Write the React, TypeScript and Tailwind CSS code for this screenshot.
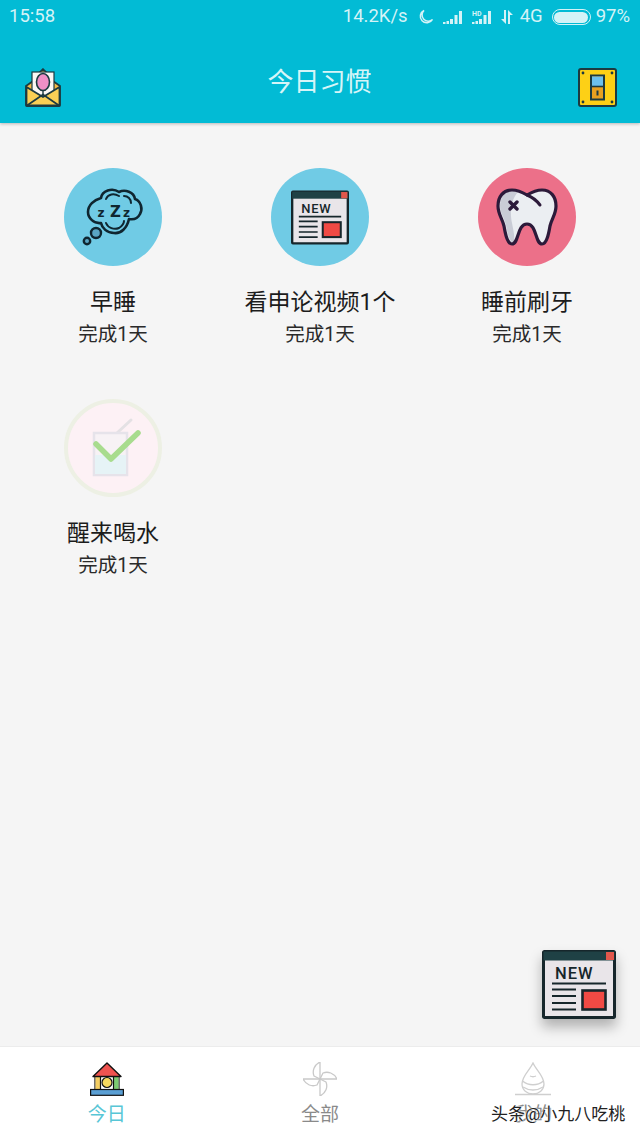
import React from "react";

const DARK = "#1c3a40";

function NewsIcon({ className }: { className: string }) {
  return (
    <svg viewBox="0 0 74 69" className={className}>
      <rect x="1.5" y="1.5" width="71" height="66" rx="1" fill="#e9e5e9" stroke="#16262b" strokeWidth="3" />
      <rect x="1.5" y="1.5" width="71" height="9" fill="#1f4145" />
      <rect x="64" y="2" width="8" height="8" fill="#e2574c" />
      <text x="13" y="29" fontFamily="Roboto, sans-serif" fontWeight="500" fontSize="16.5" letterSpacing="1" fill="#16262b">NEW</text>
      <path d="M10 33.5H64M10 39.5H34M10 46H34M10 53H34M10 59.5H34" stroke="#16262b" strokeWidth="2.2" fill="none" />
      <rect x="40.5" y="40.5" width="23" height="19" fill="#f04a44" stroke="#16262b" strokeWidth="2.6" />
    </svg>
  );
}

function SleepIcon() {
  return (
    <svg viewBox="0 0 98 98" className="w-[98px] h-[98px]">
      <path
        d="M37 30C38 23 48 19 55 24C61 21 70 24 71 31C77 33 79 41 76 46C74 50 70 52 65 51C63 60 57 66 50 65C43 65 38 60 37 55C30 56 24 50 24 44C24 37 30 32 37 30z"
        fill="none"
        stroke="#0f2630"
        strokeWidth="2.6"
        strokeLinejoin="round"
      />
      <path d="M42 31C44 26 50 25 55 28M60 28C64 28 67 31 67 35M42 55C44 60 50 62 55 60C58 58 60 56 60 53" fill="none" stroke="#0f2630" strokeWidth="2" strokeLinecap="round" />
      <text x="33.5" y="49" fontFamily="'DejaVu Sans', sans-serif" fontWeight="700" fontSize="12" fill="#0f2630">z</text>
      <text x="46" y="49" fontFamily="'DejaVu Sans', sans-serif" fontWeight="700" fontSize="15" fill="#0f2630">Z</text>
      <text x="59" y="49" fontFamily="'DejaVu Sans', sans-serif" fontWeight="700" fontSize="12" fill="#0f2630">z</text>
      <circle cx="32" cy="65" r="5" fill="#5aa6c4" stroke="#0f2630" strokeWidth="2.4" />
      <circle cx="23" cy="73" r="3.2" fill="#5aa6c4" stroke="#0f2630" strokeWidth="2.4" />
    </svg>
  );
}

function ToothIcon() {
  const outline =
    "M34 22c5 0 10 2 15 5 5-3 10-5 15-5 9 0 14 7 14 16 0 8-4 12-6 20-1 6-3 18-8 18-7 0-5-20-15-20s-8 20-15 20c-5 0-7-12-8-18-2-8-6-12-6-20 0-9 5-16 14-16z";
  return (
    <svg viewBox="0 0 98 98" className="w-[98px] h-[98px]">
      <path d={outline} fill="#ebeef2" />
      <path d="M22 38c0 7 4 11 6 19 1 6 3 18 8 18 1-8-1-14-2-20-2-9-2-22 6-31-2-1-4-2-6-2-7 0-12 8-12 16z" fill="#c9ccd6" />
      <path d={outline} fill="none" stroke="#2c1a3a" strokeWidth="3.2" strokeLinejoin="round" />
      <path d="M49 27c5 2 10 6 13 10" fill="none" stroke="#2c1a3a" strokeWidth="3" strokeLinecap="round" />
      <path d="M32 34l7 7M39 34l-7 7" stroke="#2c1a3a" strokeWidth="3.4" strokeLinecap="round" />
    </svg>
  );
}

function WaterIcon() {
  return (
    <svg viewBox="0 0 98 98" className="w-[98px] h-[98px]">
      <path d="M53 34l14-13" stroke="#e4e1e4" strokeWidth="3" fill="none" strokeLinecap="round" />
      <rect x="30" y="34" width="33" height="42" fill="#f7f2f5" stroke="#e6e3ea" strokeWidth="2.5" />
      <rect x="31" y="56" width="31" height="19" fill="#e6f3f6" />
      <path d="M32 45l15 15 27-26" fill="none" stroke="#a8dc8e" strokeWidth="5.5" strokeLinecap="round" strokeLinejoin="round" />
    </svg>
  );
}

function EnvelopeIcon() {
  return (
    <svg viewBox="0 0 36 39" className="w-9 h-[39px]">
      <path d="M18 1l4 4H14z" fill="#f7c94e" stroke={DARK} strokeWidth="1.6" />
      <path d="M1 18L18 6l17 12v19a1 1 0 0 1-1 1H2a1 1 0 0 1-1-1z" fill="#f5b945" stroke={DARK} strokeWidth="1.8" />
      <rect x="7" y="4" width="22" height="24" fill="#fbf8f5" stroke={DARK} strokeWidth="1.2" />
      <ellipse cx="18" cy="14" rx="6.5" ry="8.5" fill="#ef8fc6" stroke={DARK} strokeWidth="1.6" />
      <path d="M18 22.5v4" stroke={DARK} strokeWidth="1.4" />
      <path d="M1.5 19L18 29l16.5-10V37.5H1.5z" fill="#f9cf55" stroke={DARK} strokeWidth="1.8" strokeLinejoin="round" />
      <path d="M2 37.5l16-11 16 11" fill="none" stroke={DARK} strokeWidth="1.8" />
    </svg>
  );
}

function SwitchIcon() {
  return (
    <svg viewBox="0 0 39 39" className="w-[39px] h-[39px]">
      <rect x="1" y="1" width="37" height="37" rx="2" fill="#fdd016" stroke={DARK} strokeWidth="2" />
      <rect x="13" y="7.5" width="13" height="24" fill="#e8a020" stroke={DARK} strokeWidth="2" />
      <rect x="14" y="8.5" width="11" height="10" fill="#6cc0ee" />
      <path d="M13 18.5h13" stroke={DARK} strokeWidth="1.6" />
      <path d="M19.5 22.5v5" stroke={DARK} strokeWidth="2" />
      <g fill={DARK}>
        <circle cx="5" cy="5" r="1.4" />
        <circle cx="34" cy="5" r="1.4" />
        <circle cx="5" cy="34" r="1.4" />
        <circle cx="34" cy="34" r="1.4" />
      </g>
    </svg>
  );
}

function HouseIcon() {
  return (
    <svg viewBox="0 0 34 34" className="w-[34px] h-[34px]">
      <rect x="5" y="14" width="24" height="14" fill="#fff" stroke="#111" strokeWidth="1.2" />
      <rect x="5.5" y="14.5" width="5" height="13" fill="#f5cf63" />
      <rect x="23.5" y="14.5" width="5" height="13" fill="#7ccb72" />
      <path d="M10.5 14v14M23.5 14v14" stroke="#111" strokeWidth="1.2" />
      <circle cx="17" cy="20.5" r="5" fill="#f6d95e" stroke="#111" strokeWidth="1.2" />
      <path d="M17 1L3 14.5h28z" fill="#ef5350" stroke="#111" strokeWidth="1.4" strokeLinejoin="round" />
      <rect x="0.6" y="27.5" width="32.8" height="5.8" fill="#5a9fd4" stroke="#111" strokeWidth="1.2" />
    </svg>
  );
}

function PinwheelIcon() {
  return (
    <svg viewBox="0 0 34 34" className="w-[34px] h-[34px]" fill="none" stroke="#c9c9c9" strokeWidth="1.3" strokeLinejoin="round">
      <path d="M17 17L17 0C11 3 9 9 11 14z" />
      <path d="M17 17L34 17C31 11 25 9 20 11z" />
      <path d="M17 17L17 34C23 31 25 25 23 20z" />
      <path d="M17 17L0 17C3 23 9 25 14 23z" />
    </svg>
  );
}

function DropIcon() {
  return (
    <svg viewBox="0 0 36 34" className="w-9 h-[34px]" fill="none" stroke="#cfcfcf" strokeWidth="1.3">
      <path d="M18 1C15 8 7 14 7 22c0 6 5 10 11 10s11-4 11-10c0-8-8-14-11-21z" />
      <path d="M7.5 19c6 5 15 5 21 0M8 25c6 4 14 4 20 0M15 14c2 1 4 1 6 0" />
      <path d="M0 32.5h36" />
    </svg>
  );
}

function SignalIcon({ hd }: { hd?: boolean }) {
  return (
    <svg viewBox="0 0 22 16" className="w-[22px] h-4" fill="#d4f3f7">
      <rect x="0" y="13" width="2.5" height="2" />
      <rect x="3.5" y="12" width="2.5" height="3" />
      <rect x="7" y="10" width="3" height="5" />
      <rect x="11.5" y="6" width="3" height="9" />
      <rect x="16" y="2" width="3" height="13" />
      {hd && (
        <text x="0" y="6.5" fontFamily="Roboto, sans-serif" fontWeight="700" fontSize="7">
          HD
        </text>
      )}
    </svg>
  );
}

const habits = [
  { title: "早睡", bg: "bg-[#70cbe5]", icon: <SleepIcon /> },
  { title: "看申论视频1个", bg: "bg-[#70cbe5]", icon: <div className="flex items-center justify-center h-full"><NewsIcon className="w-[58px] h-[55px]" /></div> },
  { title: "睡前刷牙", bg: "bg-[#ec7089]", icon: <ToothIcon /> },
];

function Label({ title }: { title: string }) {
  return (
    <>
      <div className="mt-[22px] h-[30px] leading-[30px] text-[23px] text-[#1c1c1c] whitespace-nowrap">{title}</div>
      <div className="mt-[2px] h-[30px] leading-[30px] text-[19.5px] text-[#2a2a2a] whitespace-nowrap">完成1天</div>
    </>
  );
}

export default function App() {
  return (
    <div className="relative flex flex-col w-[640px] h-[1137px] bg-[#f5f5f5] overflow-hidden font-['Roboto','Noto_Sans_CJK_SC',sans-serif]">
      <header className="flex flex-col h-[123px] bg-[#02bbd5] shadow-[0_1px_3px_rgba(0,0,0,0.25)] z-10">
        <div className="flex items-center h-[34px] pl-[9px] pr-[10px] text-[18.5px] text-[#d4f3f7]">
          <span>15:58</span>
          <span className="ml-auto">14.2K/s</span>
          <svg viewBox="0 0 16 16" className="ml-[10px] w-4 h-4" fill="none" stroke="#d4f3f7" strokeWidth="1.5">
            <path d="M6 1.5a6.5 6.5 0 1 0 8.5 9A6 6 0 0 1 6 1.5z" />
          </svg>
          <span className="ml-[9px] flex"><SignalIcon /></span>
          <span className="ml-[7px] flex"><SignalIcon hd /></span>
          <svg viewBox="0 0 14 16" className="ml-[6px] w-[14px] h-4" fill="#d4f3f7">
            <path d="M4 1h2v14L1 10h3zM8 15V1l5 5h-3v9z" />
          </svg>
          <span className="ml-[6px]">4G</span>
          <span className="ml-[9px] flex items-center w-[39px] h-4 rounded-full border-[1.5px] border-[#d4f3f7] p-[1.5px]">
            <span className="block w-full h-full rounded-full bg-[#d4f3f7]" />
          </span>
          <span className="ml-[5px]">97%</span>
        </div>
        <nav className="flex items-center justify-between flex-1 pl-[25px] pr-[23px] pt-[18px]">
          <EnvelopeIcon />
          <span className="text-[26px] leading-none text-[#d6f5f8] mb-[11px]">今日习惯</span>
          <SwitchIcon />
        </nav>
      </header>

      <main className="flex-1 px-[9.5px] pt-[45px]">
        <div className="grid grid-cols-3 gap-y-[49px]">
          {habits.map((h) => (
            <div key={h.title} className="flex flex-col items-center">
              <div className={`w-[98px] h-[98px] rounded-full ${h.bg}`}>{h.icon}</div>
              <Label title={h.title} />
            </div>
          ))}
          <div className="flex flex-col items-center">
            <div className="w-[98px] h-[98px] rounded-full bg-[#fdf1f5] border-4 border-[#edf0e4] flex items-center justify-center">
              <div className="w-[98px] h-[98px] shrink-0"><WaterIcon /></div>
            </div>
            <Label title="醒来喝水" />
          </div>
        </div>
      </main>

      <div className="absolute left-[542px] top-[950px] shadow-[0_8px_12px_rgba(0,0,0,0.28)]">
        <NewsIcon className="block w-[74px] h-[69px]" />
      </div>

      <footer className="grid grid-cols-3 h-[91px] bg-white border-t border-[#ececec] pt-[15px]">
        <div className="flex flex-col items-center">
          <HouseIcon />
          <span className="mt-[5px] text-[19px] leading-[28px] text-[#58c6d6]">今日</span>
        </div>
        <div className="flex flex-col items-center">
          <PinwheelIcon />
          <span className="mt-[5px] text-[19px] leading-[28px] text-[#8a8a8a]">全部</span>
        </div>
        <div className="flex flex-col items-center">
          <DropIcon />
          <span className="mt-[5px] text-[19px] leading-[28px] text-[#8a8a8a]">我的</span>
        </div>
      </footer>

      <div className="absolute left-[491px] top-[1101px] text-[17px] leading-[26px] text-[#222] whitespace-nowrap [text-shadow:0_0_2px_#fff,0_0_2px_#fff]">
        头条@小九八吃桃
      </div>
    </div>
  );
}
